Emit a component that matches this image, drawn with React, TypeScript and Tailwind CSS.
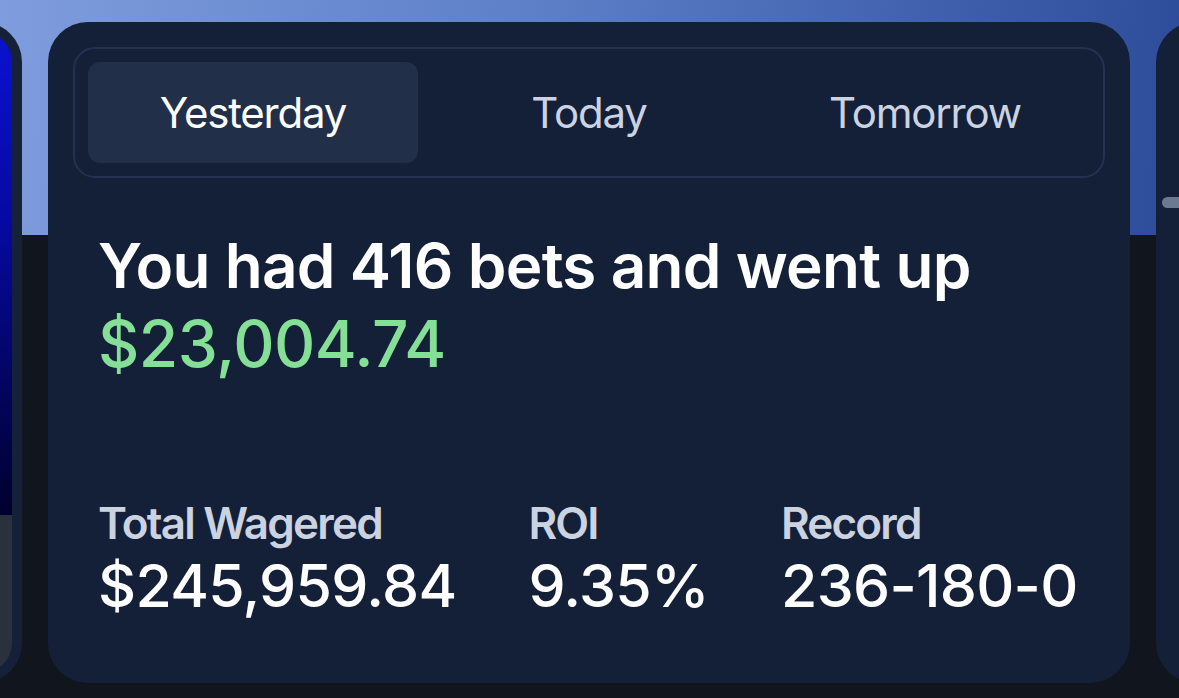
import { useState } from 'react'

type Tab = 'Yesterday' | 'Today' | 'Tomorrow'

const tabs: Tab[] = ['Yesterday', 'Today', 'Tomorrow']

const stats = [
  { label: 'Total Wagered', value: '$245,959.84' },
  { label: 'ROI', value: '9.35%' },
  { label: 'Record', value: '236-180-0' },
]

export default function App() {
  const [tab, setTab] = useState<Tab>('Yesterday')

  return (
    <div
      className="h-[698px] w-[1179px] overflow-hidden bg-[linear-gradient(180deg,transparent_235px,#11151d_235px),linear-gradient(95deg,#7f9ddd_0%,#5b7ec7_45%,#2a4897_100%)]"
      style={{ fontFamily: 'Inter, "Noto Sans", sans-serif' }}
    >
      <div className="flex h-full gap-[26px] pt-[22px] pb-[15px]">
        {/* previous card, mostly off screen */}
        <div className="ml-[-278px] flex w-[300px] shrink-0 rounded-[40px] bg-[#152039] py-[10px] pr-[10px]">
          <div className="flex flex-1 flex-col overflow-hidden rounded-r-[30px]">
            <div className="h-[483px] bg-[linear-gradient(180deg,#0a12d0_0%,#0609a0_40%,#00002c_100%)]" />
            <div className="flex-1 bg-[#2a313d]" />
          </div>
        </div>

        {/* main card */}
        <div className="flex w-[1082px] shrink-0 flex-col rounded-[40px] bg-[#141f38] px-[25px] pt-[25px]">
          <div className="flex h-[131px] shrink-0 gap-[6px] rounded-[22px] border-2 border-[#243150] p-[13px]">
            {tabs.map((t) => (
              <button
                key={t}
                onClick={() => setTab(t)}
                className={
                  t === tab
                    ? 'flex flex-1 items-center justify-center rounded-[12px] bg-[#212f49] text-[42px] font-normal tracking-[-1.2px] text-white'
                    : 'flex flex-1 items-center justify-center rounded-[12px] text-[42px] font-normal tracking-[-1.2px] text-[#cbd3e1]'
                }
              >
                {t}
              </button>
            ))}
          </div>

          <div className="mt-[49px] px-[25px]">
            <h1 className="text-[62px] font-semibold leading-[78px] tracking-[-0.7px] text-white">
              You had 416 bets and went up
              <br />
              <span className="text-[64px] font-medium tracking-[-0.5px] text-[#86df96]">$23,004.74</span>
            </h1>

            <div className="mt-[112px] flex gap-[72px]">
              {stats.map((s) => (
                <div key={s.label} className="flex flex-col whitespace-nowrap">
                  <span className="text-[44px] font-semibold leading-[54px] tracking-[-1.8px] text-[#cbd2e0]">{s.label}</span>
                  <span className="text-[59px] font-medium leading-[71px] tracking-[-0.7px] text-white">{s.value}</span>
                </div>
              ))}
            </div>
          </div>
        </div>

        {/* next card, mostly off screen */}
        <div className="w-[300px] shrink-0 rounded-[40px] bg-[#141f38] pt-[175px]">
          <div className="ml-[6px] h-[11px] w-[40px] rounded-full bg-[#6c7a91]" />
        </div>
      </div>
    </div>
  )
}
